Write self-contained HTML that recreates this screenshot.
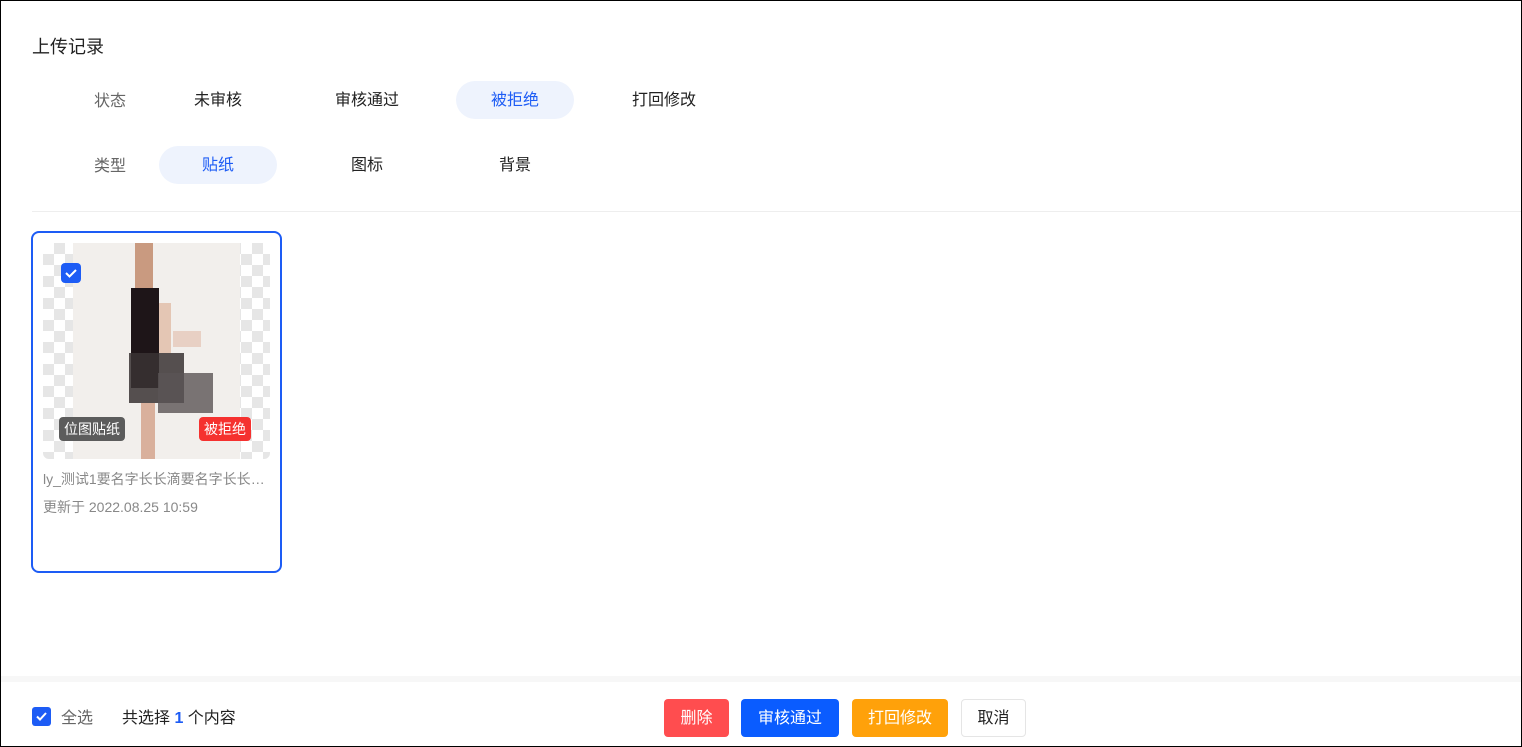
<!DOCTYPE html>
<html><head><meta charset="utf-8"><style>
*{margin:0;padding:0;box-sizing:border-box}
body{width:1522px;height:747px;overflow:hidden;background:#fff;font-family:"Liberation Sans","Noto Sans CJK SC",sans-serif;position:relative}
.frame{position:absolute;left:0;top:0;width:1522px;height:747px;border:1px solid #000;pointer-events:none;z-index:10}
.a{position:absolute}
.t{position:absolute;font-size:16px;color:#222;text-align:center;width:118px;height:38px;line-height:40px;border-radius:19px}
.t.on{background:#eef3fd;color:#1d5cf5}
.lbl{position:absolute;font-size:16px;color:#666;line-height:20px}
.btn{position:absolute;top:699px;height:38px;line-height:40px;font-size:16px;color:#fff;text-align:center;border-radius:4px}
</style></head><body>
<div class="a" style="left:32px;top:36px;font-size:18px;color:#222;line-height:22px">上传记录</div>
<div class="lbl" style="left:94px;top:92px">状态</div>
<div class="t" style="left:159px;top:81px">未审核</div>
<div class="t" style="left:308px;top:81px">审核通过</div>
<div class="t on" style="left:456px;top:81px">被拒绝</div>
<div class="t" style="left:605px;top:81px">打回修改</div>
<div class="lbl" style="left:94px;top:157px">类型</div>
<div class="t on" style="left:159px;top:146px">贴纸</div>
<div class="t" style="left:308px;top:146px">图标</div>
<div class="t" style="left:456px;top:146px">背景</div>
<div class="a" style="left:32px;top:211px;width:1490px;height:1px;background:#eee"></div>

<div class="a" style="left:31px;top:231px;width:251px;height:342px;border:2px solid #1d5cf5;border-radius:8px"></div>
<div class="a" style="left:43px;top:243px;width:227px;height:216px;border-radius:6px;overflow:hidden;background-color:#fff;background-image:linear-gradient(45deg,#e6e6e6 25%,transparent 25%,transparent 75%,#e6e6e6 75%),linear-gradient(45deg,#e6e6e6 25%,transparent 25%,transparent 75%,#e6e6e6 75%);background-size:22px 22px;background-position:0 0,11px 11px">
 <div class="a" style="left:30px;top:0;width:167px;height:216px;background:#f2efec"></div>
 <div class="a" style="left:92px;top:0;width:18px;height:45px;background:#c99a80"></div>
 <div class="a" style="left:88px;top:45px;width:28px;height:100px;background:#1e1518"></div>
 <div class="a" style="left:116px;top:60px;width:12px;height:50px;background:#e4c6b4"></div>
 <div class="a" style="left:86px;top:110px;width:55px;height:50px;background:#3a3234;opacity:.85"></div>
 <div class="a" style="left:115px;top:130px;width:55px;height:40px;background:#5a5455;opacity:.8"></div>
 <div class="a" style="left:98px;top:160px;width:14px;height:56px;background:#d9b09c"></div>
 <div class="a" style="left:130px;top:88px;width:28px;height:16px;background:#e8d0c4"></div>
</div>
<div class="a" style="left:61px;top:263px;width:20px;height:20px;border-radius:4px;background:#1d5cf5"><svg width="20" height="20"><path d="M5 10l3.5 3.5L15 7" fill="none" stroke="#fff" stroke-width="2"/></svg></div>
<div class="a" style="left:59px;top:417px;height:24px;line-height:25px;padding:0 5px;background:#5c5c5c;color:#fff;font-size:14px;border-radius:4px">位图贴纸</div>
<div class="a" style="left:199px;top:417px;height:24px;line-height:25px;padding:0 5px;background:#f5312f;color:#fff;font-size:14px;border-radius:4px">被拒绝</div>
<div class="a" style="left:43px;top:470px;font-size:14px;line-height:18px;color:#888;width:228px;white-space:nowrap;overflow:hidden;text-overflow:ellipsis">ly_测试1要名字长长滴要名字长长滴要名字</div>
<div class="a" style="left:43px;top:498px;font-size:14px;line-height:18px;color:#888">更新于 2022.08.25 10:59</div>

<div class="a" style="left:0;top:676px;width:1522px;height:6px;background:#f7f7f7"></div>
<div class="a" style="left:32px;top:707px;width:19px;height:19px;border-radius:3px;background:#1d5cf5"><svg width="19" height="19"><path d="M5 9.5l3 3L14 6" fill="none" stroke="#fff" stroke-width="2"/></svg></div>
<div class="a" style="left:61px;top:709px;font-size:16px;line-height:20px;color:#666">全选</div>
<div class="a" style="left:122px;top:709px;font-size:16px;line-height:20px;color:#222">共选择 <b style="color:#1d5cf5">1</b> 个内容</div>
<div class="btn" style="left:664px;width:65px;background:#ff4d4f">删除</div>
<div class="btn" style="left:741px;width:98px;background:#0a5cff">审核通过</div>
<div class="btn" style="left:852px;width:96px;background:#ffa10a">打回修改</div>
<div class="btn" style="left:961px;width:65px;background:#fff;color:#222;border:1px solid #e5e5e5;line-height:38px">取消</div>
<div class="frame"></div>
</body></html>
